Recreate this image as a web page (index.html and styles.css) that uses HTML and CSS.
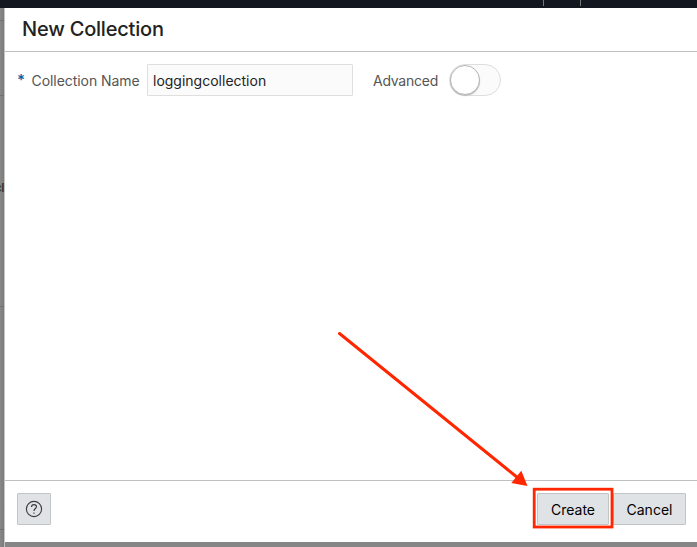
FILE: index.html
```
<!DOCTYPE html>
<html lang="en">
<head>
<meta charset="utf-8">
<title>New Collection</title>
<link rel="stylesheet" href="styles.css">
</head>
<body>
<div class="topbar"><i class="tick"></i><i class="tick"></i></div>
<div class="workspace">
  <aside class="backdrop">
    <div class="strip strip-head"></div>
    <div class="strip strip-nav"></div>
    <div class="strip strip-list"><span>cl</span></div>
    <div class="strip strip-body"></div>
    <div class="strip strip-foot"></div>
  </aside>
  <main class="dialog">
    <header class="dialog-header"><h1>New Collection</h1></header>
    <form class="dialog-body">
      <span class="required">*</span>
      <label class="name-label" for="name">Collection Name</label>
      <input id="name" class="name-input" type="text" value="loggingcollection">
      <span class="advanced-label">Advanced</span>
      <span class="switch"><span class="thumb"></span></span>
    </form>
    <footer class="dialog-footer">
      <button class="btn help" type="button" aria-label="Help">
        <svg width="18" height="18" viewBox="0 0 18 18" fill="none" stroke="#3c3c3c" stroke-width="1.15">
          <circle cx="9" cy="9" r="7.6"/>
          <path d="M6.5 7.1C6.5 5.5 7.5 4.6 9 4.6s2.5.9 2.5 2.2c0 1.7-2.5 1.9-2.5 4.1"/>
          <path d="M9 12.4v1.3"/>
        </svg>
      </button>
      <button class="btn create" type="button">Create</button>
      <button class="btn cancel" type="button">Cancel</button>
    </footer>
  </main>
</div>
<svg class="annotation" width="697" height="547" viewBox="0 0 697 547" fill="none" stroke="#ff2600">
  <path d="M339.5 333.5L518 478" stroke-width="3" stroke-linecap="round"/>
  <path d="M527.5 486L521.3 470.8L511.3 483Z" fill="#ff2600" stroke="none"/>
  <rect x="534.2" y="489.2" width="77.8" height="37.8" stroke-width="2.8"/>
</svg>
</body>
</html>
```
FILE: styles.css
```
* { box-sizing: border-box; }
body {
  margin: 0;
  width: 697px;
  height: 547px;
  overflow: hidden;
  position: relative;
  display: flex;
  flex-direction: column;
  background: #868686;
  font-family: Inter, "Liberation Sans", sans-serif;
  font-size: 14px;
}
.topbar {
  height: 8px;
  flex: none;
  background: #13171f;
  display: flex;
  justify-content: flex-end;
  gap: 36px;
  padding-right: 116px;
}
.tick { width: 1px; height: 6px; background: #777; }
.workspace { flex: 1; display: flex; min-height: 0; }
.backdrop {
  width: 5px;
  flex: none;
  overflow: hidden;
  background: linear-gradient(to right, #898887, #7c7b7a 80%, #c4c4c4 80%);
}
.strip { border-bottom: 1px solid #70706f; width: 4px; }
.strip-head { height: 13px; }
.strip-nav { height: 75px; }
.strip-list { height: 211px; padding-top: 84px; }
.strip-list span { display: flex; justify-content: flex-end; width: 4px; font-size: 12px; letter-spacing: -.5px; font-weight: 600; color: #333; }
.strip-body { height: 223px; }
.strip-foot { border: 0; }
.dialog {
  flex: 1;
  height: 534px;
  background: #fff;
  display: flex;
  flex-direction: column;
}
.dialog-header {
  height: 44px;
  border-bottom: 1px solid #bfbfbf;
  padding: 9px 17px 0;
}
h1 { margin: 0; font-size: 20px; line-height: 24px; font-weight: 500; color: #222; letter-spacing: -.2px; }
.dialog-body { flex: 1; display: flex; align-items: flex-start; padding: 12px 12px; line-height: 34px; }
.required { width: 14.5px; color: #0b62a4; font-size: 15px; font-weight: 600; line-height: 31px; }
.name-label, .advanced-label { color: #555; letter-spacing: -.06px; }
.name-label { width: 115.5px; white-space: nowrap; }
.advanced-label { width: 76px; margin-left: 20px; letter-spacing: -.25px; }
.name-input {
  width: 206px;
  height: 32px;
  padding: 2px 5px 0;
  border: 1px solid #dfdfdf;
  border-radius: 1px;
  background: #fbfbfb;
  color: #222;
  font: inherit;
}
.switch {
  width: 52px;
  height: 32px;
  border: 1px solid #dedede;
  border-radius: 16px;
  background: #fbfbfb;
}
.thumb {
  display: block;
  width: 30px;
  height: 30px;
  border: 1px solid #b5b5b5;
  border-radius: 50%;
  background: #fff;
  box-shadow: 0 1px 1px #bbb;
}
.dialog-footer {
  height: 62px;
  border-top: 1px solid #bfbfbf;
  padding: 12px 11px 0 12px;
  display: flex;
}
.btn {
  height: 32px;
  padding: 1px 0 0;
  border: 1px solid #c2c4c6;
  border-radius: 1px;
  background: #dfe3e6;
  color: #000;
  font: 400 14px Inter, "Liberation Sans", sans-serif;
}
.help { width: 34px; padding: 0; display: flex; align-items: center; justify-content: center; margin-right: auto; }
.create { width: 72px; }
.cancel { width: 73px; margin-left: 4px; }
.annotation { position: absolute; left: 0; top: 0; pointer-events: none; }
```
